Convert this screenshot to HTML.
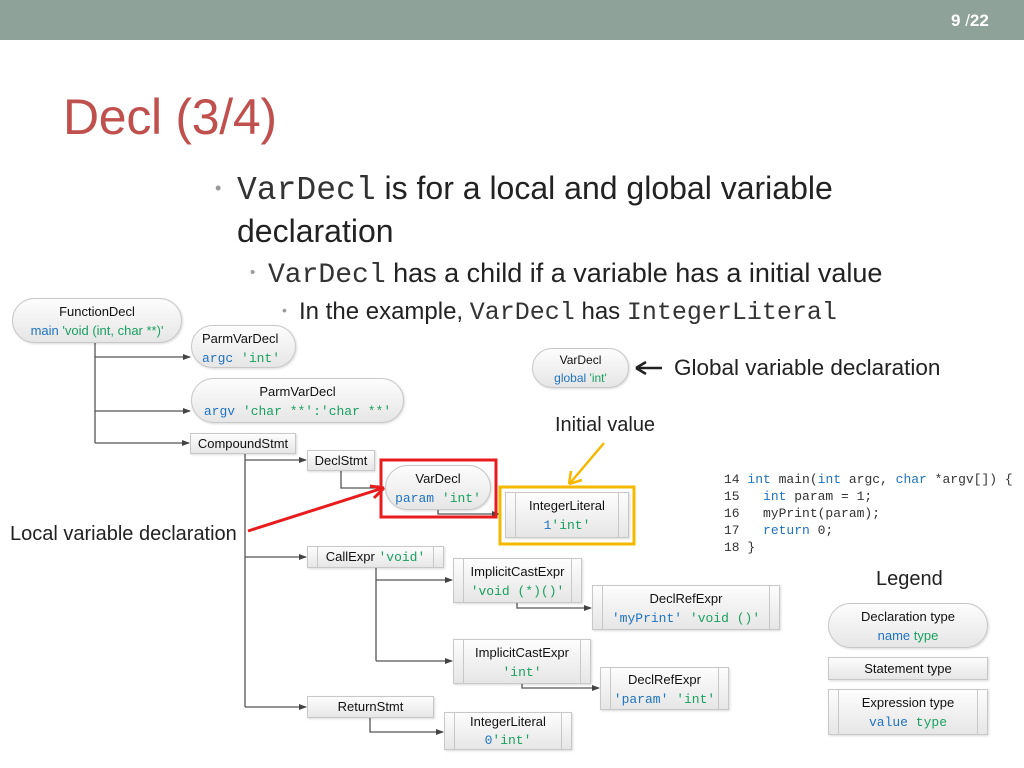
<!DOCTYPE html>
<html><head><meta charset="utf-8"><style>
*{margin:0;padding:0;box-sizing:border-box}
body{width:1024px;height:768px;position:relative;background:#fff;font-family:"Liberation Sans",sans-serif;overflow:hidden;color:#222}
.a{position:absolute;white-space:nowrap}
.mono{font-family:"Liberation Mono",monospace}
.box{position:absolute;border:1px solid #c8c8c8;background:linear-gradient(#fdfdfd,#e6e6e6);text-align:center;font-size:13px;line-height:19px;color:#111;box-shadow:1px 1px 2px rgba(0,0,0,.15)}
.r{border-radius:23px}
.e{border-left:1px solid #c8c8c8}
.e:before,.e:after{content:"";position:absolute;top:0;bottom:0;width:1px;background:#c8c8c8}
.e:before{left:9px}.e:after{right:9px}
.b{color:#1f73c0}.g{color:#1aa060}
.m{font-family:"Liberation Mono",monospace;font-size:13px}
.code{position:absolute;left:724px;top:471px;font-family:"Liberation Mono",monospace;font-size:13px;line-height:17px;color:#333;white-space:pre}
.kw{color:#1f73c0}
.bu{position:absolute;color:#999}
</style></head><body>
<div class="a" style="left:0;top:0;width:1024px;height:40px;background:#8fa29a"></div>
<div class="a" style="left:951px;top:11px;color:#fff;font-size:17px;font-weight:bold">9 <span style="font-weight:normal">/</span>22</div>
<div class="a" style="left:63px;top:88px;font-size:50px;color:#c0504d;letter-spacing:-0.3px">Decl (3/4)</div>

<div class="bu" style="left:215px;top:178px;font-size:18px">•</div>
<div class="a" style="left:237px;top:170px;font-size:32px;color:#222"><span class="mono" style="font-size:33px;color:#333">VarDecl</span> is for a local and global variable</div>
<div class="a" style="left:237px;top:213px;font-size:32px">declaration</div>
<div class="bu" style="left:250px;top:264px;font-size:15px">•</div>
<div class="a" style="left:268px;top:258px;font-size:27px"><span class="mono" style="font-size:28px;color:#333">VarDecl</span> has a child if a variable has a initial value</div>
<div class="bu" style="left:282px;top:302px;font-size:14px">•</div>
<div class="a" style="left:299px;top:298px;font-size:24px">In the example, <span class="mono" style="font-size:25px;color:#333">VarDecl</span> has <span class="mono" style="font-size:25px;color:#333">IntegerLiteral</span></div>

<svg class="a" style="left:0;top:0" width="1024" height="768">
<defs><marker id="ar" markerWidth="8" markerHeight="8" refX="7" refY="4" orient="auto" markerUnits="userSpaceOnUse"><path d="M0,1 L8,4 L0,7z" fill="#444"/></marker></defs>
<g stroke="#555" stroke-width="1.3" fill="none">
<path d="M95 343V443"/>
<path d="M95 357H190" marker-end="url(#ar)"/>
<path d="M95 411H190" marker-end="url(#ar)"/>
<path d="M95 443H189" marker-end="url(#ar)"/>
<path d="M245 453V707"/>
<path d="M245 460H306" marker-end="url(#ar)"/>
<path d="M245 557H306" marker-end="url(#ar)"/>
<path d="M245 707H306" marker-end="url(#ar)"/>
<path d="M341 471V488H384" marker-end="url(#ar)"/>
<path d="M376 568V661"/>
<path d="M376 580H452" marker-end="url(#ar)"/>
<path d="M376 661H452" marker-end="url(#ar)"/>
<path d="M438 510V514H499" marker-end="url(#ar)"/>
<path d="M517 603V608H591" marker-end="url(#ar)"/>
<path d="M522 684V688H599" marker-end="url(#ar)"/>
<path d="M370 718V732H443" marker-end="url(#ar)"/>
</g>
<rect x="381" y="460" width="115" height="57" fill="none" stroke="#e81c1c" stroke-width="3"/>
<rect x="500" y="487" width="134" height="57" fill="none" stroke="#f5b800" stroke-width="3"/>
<path d="M248 531L380 489" stroke="#e81c1c" stroke-width="3"/>
<path d="M384 488L370 486M384 488L374 498" stroke="#e81c1c" stroke-width="3" fill="none"/>
<path d="M604 443L571 482" stroke="#f5b800" stroke-width="2.5"/>
<path d="M569 484L571 471M569 484L582 480" stroke="#f5b800" stroke-width="2.5" fill="none"/>
<path d="M662 368H636M636 368L646 362M636 368L646 374" stroke="#222" stroke-width="2.5" fill="none"/>
</svg>

<div class="box r" style="left:12px;top:298px;width:170px;height:45px;padding-top:3px">FunctionDecl<br><span class="b">main</span> <span class="g">'void (int, char **)'</span></div>
<div class="box r" style="left:191px;top:325px;width:105px;height:43px;padding-top:3px;text-align:left;padding-left:10px">ParmVarDecl<br><span class="m"><span class="b">argc</span> <span class="g">'int'</span></span></div>
<div class="box r" style="left:191px;top:378px;width:213px;height:45px;padding-top:3px">ParmVarDecl<br><span class="m"><span class="b">argv</span> <span class="g">'char **':'char **'</span></span></div>
<div class="box" style="left:190px;top:433px;width:106px;height:21px;line-height:19px">CompoundStmt</div>
<div class="box" style="left:307px;top:450px;width:68px;height:21px;line-height:19px">DeclStmt</div>
<div class="box r" style="left:385px;top:465px;width:106px;height:45px;padding-top:3px">VarDecl<br><span class="m"><span class="b">param</span> <span class="g">'int'</span></span></div>
<div class="box e" style="left:505px;top:492px;width:124px;height:46px;padding-top:3px">IntegerLiteral<br><span class="m"><span class="b">1</span><span class="g">'int'</span></span></div>
<div class="box r" style="left:532px;top:348px;width:97px;height:40px;padding-top:2px;font-size:12px;line-height:18px">VarDecl<br><span class="b">global</span> <span class="g">'int'</span></div>
<div class="a" style="left:674px;top:355px;font-size:22.5px">Global variable declaration</div>
<div class="a" style="left:555px;top:414px;font-size:20px">Initial value</div>
<div class="a" style="left:10px;top:523px;font-size:20px">Local variable declaration</div>
<div class="box e" style="left:307px;top:546px;width:137px;height:22px;line-height:20px">CallExpr <span class="m g">'void'</span></div>
<div class="box e" style="left:453px;top:558px;width:129px;height:45px;padding-top:3px">ImplicitCastExpr<br><span class="m g">'void (*)()'</span></div>
<div class="box e" style="left:592px;top:585px;width:188px;height:45px;padding-top:3px">DeclRefExpr<br><span class="m"><span class="b">'myPrint'</span> <span class="g">'void ()'</span></span></div>
<div class="box e" style="left:453px;top:639px;width:138px;height:45px;padding-top:3px">ImplicitCastExpr<br><span class="m g">'int'</span></div>
<div class="box e" style="left:600px;top:667px;width:129px;height:43px;padding-top:2px">DeclRefExpr<br><span class="m"><span class="b">'param'</span> <span class="g">'int'</span></span></div>
<div class="box" style="left:307px;top:696px;width:127px;height:22px;line-height:20px">ReturnStmt</div>
<div class="box e" style="left:444px;top:712px;width:128px;height:38px;padding-top:0px;line-height:18px">IntegerLiteral<br><span class="m"><span class="b">0</span><span class="g">'int'</span></span></div>

<div class="code"><span style="color:#333">14</span> <span class="kw">int</span> main(<span class="kw">int</span> argc, <span class="kw">char</span> *argv[]) {
15   <span class="kw">int</span> param = 1;
16   myPrint(param);
17   <span class="kw">return</span> 0;
18 }</div>

<div class="a" style="left:876px;top:568px;font-size:20px">Legend</div>
<div class="box r" style="left:828px;top:603px;width:160px;height:45px;padding-top:3px">Declaration type<br><span class="b">name</span> <span class="g">type</span></div>
<div class="box" style="left:828px;top:657px;width:160px;height:23px;line-height:21px">Statement type</div>
<div class="box e" style="left:828px;top:689px;width:160px;height:46px;padding-top:3px">Expression type<br><span class="m"><span class="b">value</span> <span class="g">type</span></span></div>
</body></html>
